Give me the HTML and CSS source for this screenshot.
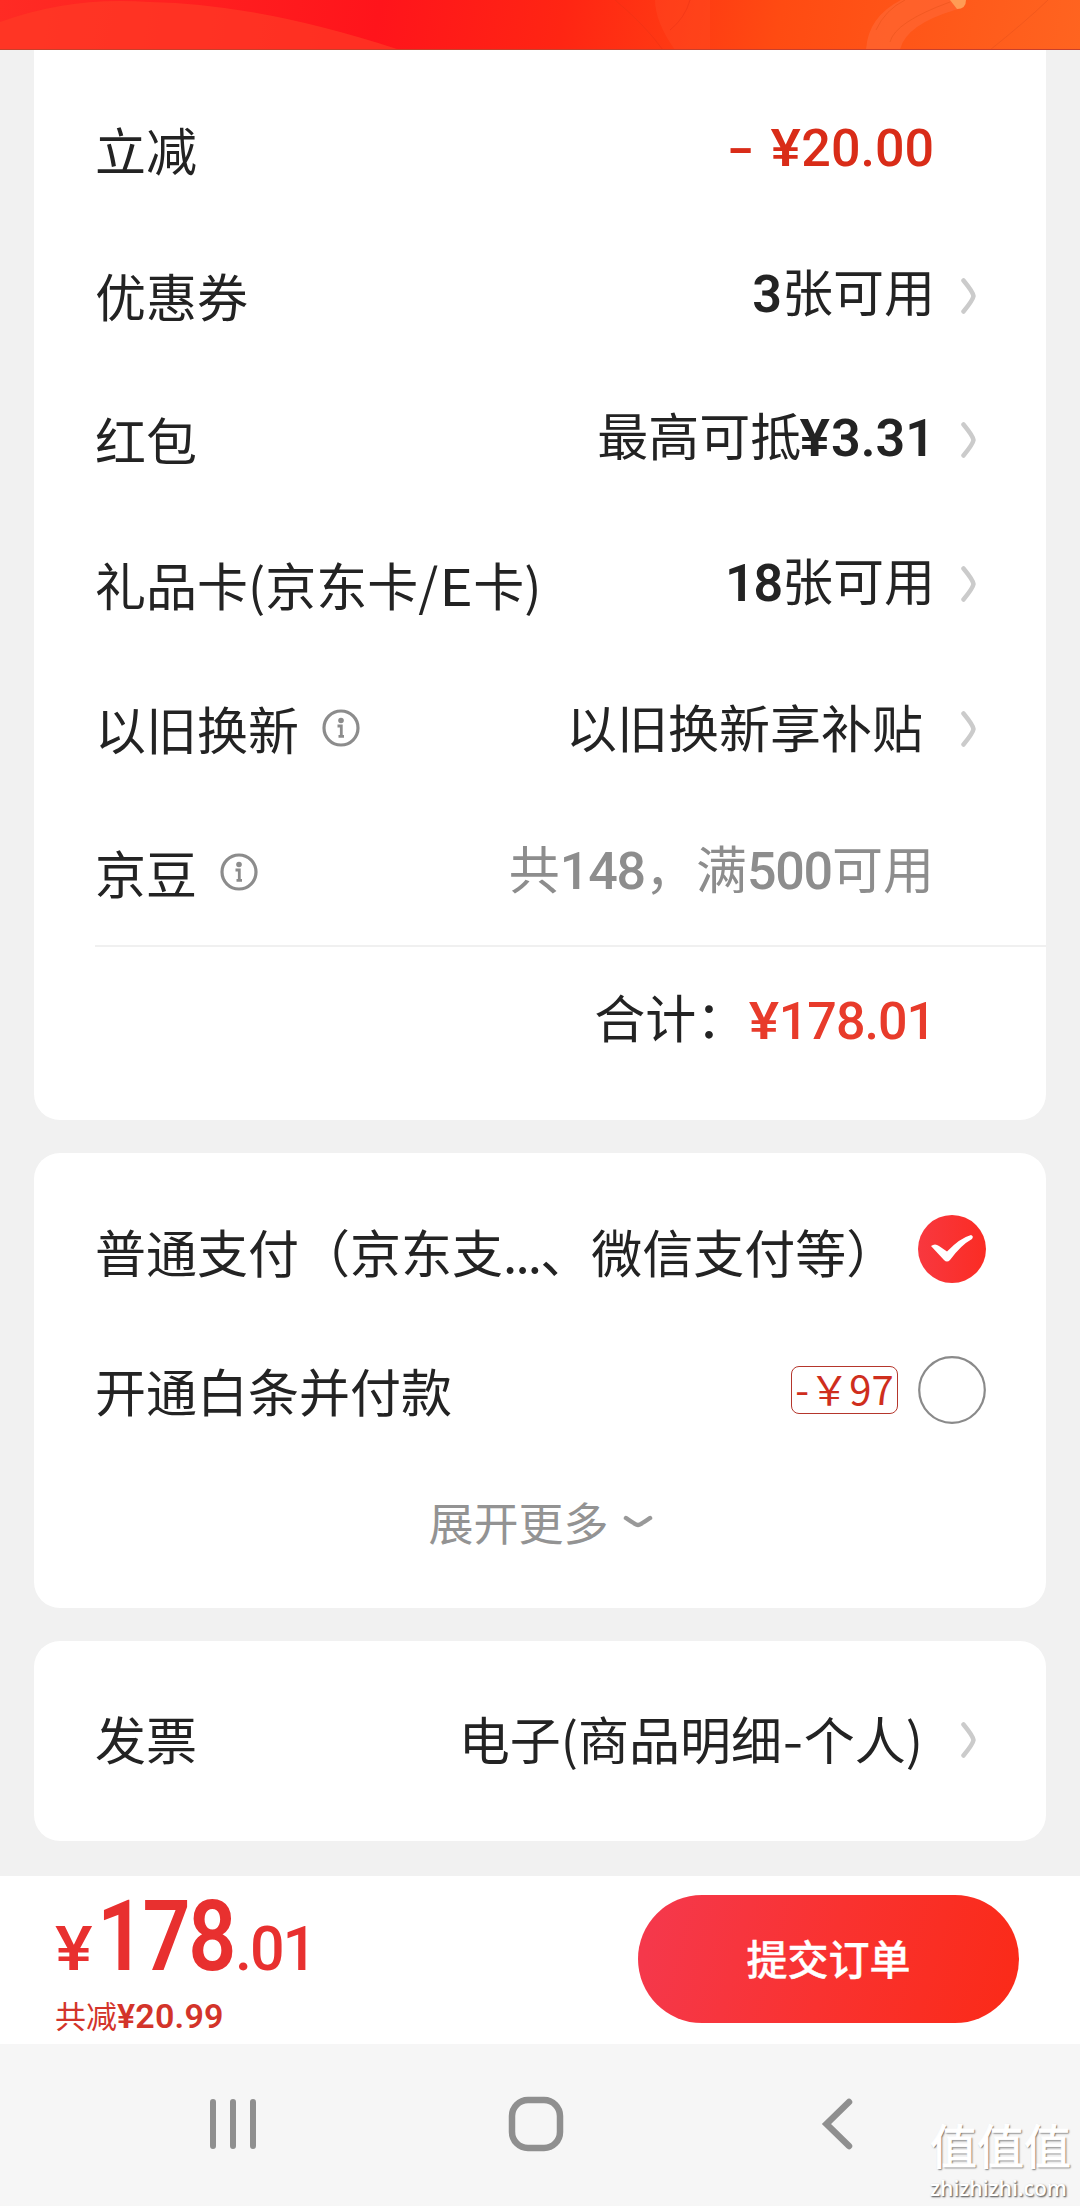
FILE: index.html
```html
<!DOCTYPE html>
<html lang="zh-CN">
<head>
<meta charset="utf-8">
<title>填写订单</title>
<link rel="stylesheet" href="styles.css">
</head>
<body>
<svg class="icon-defs" aria-hidden="true">
  <symbol id="chevron" viewBox="0 0 16 36"><path d="M2.500 2.500 Q12 14 12.500 18 Q12 22 2.500 33.500" fill="none" stroke="#cbcbcb" stroke-width="4.500" stroke-linecap="round"/></symbol>
  <symbol id="info" viewBox="0 0 40 40"><circle cx="20" cy="20" r="17" fill="none" stroke="#8c8c8c" stroke-width="3.200"/><circle cx="20" cy="12.500" r="2.800" fill="#8c8c8c"/><path d="M16.500 18H20.300V28.500M17.500 28.300H23" fill="none" stroke="#8c8c8c" stroke-width="2.800"/></symbol>
</svg>
<header class="banner">
  <svg width="1080" height="49" viewBox="0 0 1080 49">
    <path d="M0 22 Q70 -4 150 2 Q260 4 400 50 H0Z" fill="#ff3a25" opacity=".7"/>
    <path d="M655 0 Q655 22 675 50 H710 V0Z" fill="#ff4a26" opacity=".4"/>
    <path d="M615 0 Q645 25 663 50 M690 0 Q685 18 670 30" fill="none" stroke="#e93216" opacity=".5"/>
    <path d="M866 50 Q868 15 905 -2 H965 Q966 8 955 10 Q905 25 900 50Z" fill="#ff6430" opacity=".8"/>
    <path d="M950 0 H966 Q966 9 957 9Z" fill="#ff9c55"/>
    <path d="M890 42 Q895 22 950 2 M876 30 Q885 10 905 0 M990 50 Q1025 22 1048 0" fill="none" stroke="#e9531c" opacity=".6"/>
  </svg>
</header>
<main class="page">
  <section class="card card-summary">
    <div class="row first"><span class="label">立减</span><span class="value red"><span class="num"><span class="minus">-</span><span class="cny">¥</span>20.00</span></span></div>
    <div class="row"><span class="label">优惠券</span><span class="value"><span class="num bold">3</span>张可用</span><svg class="chev"><use href="#chevron"/></svg></div>
    <div class="row"><span class="label">红包</span><span class="value">最高可抵<span class="num bold"><span class="cny">¥</span>3.31</span></span><svg class="chev"><use href="#chevron"/></svg></div>
    <div class="row"><span class="label">礼品卡(京东卡/<span class="latin">E</span>卡)</span><span class="value"><span class="num bold tight">18</span>张可用</span><svg class="chev"><use href="#chevron"/></svg></div>
    <div class="row"><span class="label">以旧换新</span><svg class="info"><use href="#info"/></svg><span class="value wide low">以旧换新享补贴</span><svg class="chev"><use href="#chevron"/></svg></div>
    <div class="row"><span class="label">京豆</span><svg class="info"><use href="#info"/></svg><span class="value muted">共<span class="num tight">148</span>，满<span class="num tight">500</span>可用</span></div>
    <div class="total"><span>合计：</span><span class="num total-price"><span class="cny">¥</span>178.01</span></div>
  </section>
  <section class="card card-pay">
    <div class="pay-row"><span>普通支付（京东支<span class="dots">...</span>、微信支付等）</span>
      <svg class="radio" viewBox="0 0 68 68"><defs><linearGradient id="rg"><stop stop-color="#f8383f"/><stop offset="1" stop-color="#fb2c24"/></linearGradient></defs><circle cx="34" cy="34" r="34" fill="url(#rg)"/><path d="M13 31 Q17 28 21 31 L29 36.500 Q42 23 53 20 Q56 21 54 24 Q43 30 32 45 Q29 48 26 45Z" fill="#fff"/></svg>
    </div>
    <div class="pay-row second"><span>开通白条并付款</span><span class="tag">-￥97</span>
      <svg class="radio" viewBox="0 0 68 68"><circle cx="34" cy="34" r="32.800" fill="#fff" stroke="#8a8a8a" stroke-width="2.200"/></svg>
    </div>
    <div class="more"><span>展开更多</span><svg width="30" height="16" viewBox="0 0 30 16"><path d="M3 4 Q13 11 15 11 Q17 11 27 4" fill="none" stroke="#999" stroke-width="4.500" stroke-linecap="round"/></svg></div>
  </section>
  <section class="card card-invoice">
    <div class="row"><span class="label">发票</span><span class="value wide flat">电子(商品明细<span class="dash">-</span>个人)</span><svg class="chev"><use href="#chevron"/></svg></div>
  </section>
</main>
<footer class="checkout">
  <div class="sum">
    <div class="price"><span class="yen">¥</span><span class="int">178</span><span class="dec">.01</span></div>
    <div class="saved">共减<span class="saved-num">¥20.99</span></div>
  </div>
  <button class="submit">提交订单</button>
</footer>
<nav class="sysnav">
  <svg width="46" height="54" viewBox="0 0 46 54"><path d="M3 5V49M23 5V49M43 5V49" stroke="#8f8f8f" stroke-width="6" stroke-linecap="round"/></svg>
  <svg class="home" width="56" height="56" viewBox="0 0 56 56"><rect x="4" y="4" width="48" height="48" rx="16" fill="none" stroke="#8f8f8f" stroke-width="6.500"/></svg>
  <svg width="32" height="54" viewBox="0 0 32 54"><path d="M28 5L5.500 27L28 49" fill="none" stroke="#8f8f8f" stroke-width="6.500" stroke-linecap="round"/></svg>
  <div class="watermark"><div class="wm-name">值值值</div><div class="wm-url">zhizhizhi.com</div></div>
</nav>
</body>
</html>
```
FILE: styles.css
```css
* { box-sizing: border-box; }
body {
  margin: 0;
  width: 1080px;
  height: 2206px;
  overflow: hidden;
  display: flex;
  flex-direction: column;
  background: #f1f1f1;
  color: #232323;
  font-family: "Noto Sans CJK SC", sans-serif;
  font-size: 51px;
  line-height: 60px;
  white-space: nowrap;
}
svg { display: block; flex: none; }
.icon-defs { position: absolute; width: 0; height: 0; }
.banner {
  height: 50px;
  flex: none;
  background: linear-gradient(100deg, #ff2b24 0%, #ff141b 35%, #ff2513 52%, #ff4b12 72%, #ff6420 100%);
  border-bottom: 1px solid #c8402c;
}
.page {
  height: 1826px;
  flex: none;
  padding: 0 34px;
  display: flex;
  flex-direction: column;
  gap: 33px;
}
.card { background: #fff; border-radius: 26px; flex: none; }
.card-summary { height: 1070px; padding: 25px 0 0 61px; border-radius: 0 0 26px 26px; }
.row { height: 144.3px; display: flex; align-items: center; padding-right: 69px; }
.row.first { height: 148px; }
.value { margin: -9px 43px 0 auto; }
.value:has(+ .chev) { margin-right: 26px; }
.value.wide:has(+ .chev) { margin-right: 38px; }
.value.low { margin-top: -5px; }
.value.flat { margin-top: -1px; }
.row .chev { width: 16px; height: 36px; margin-top: 1px; }
.card-invoice .chev { margin-top: 4px; }
.info { width: 40px; height: 40px; margin: -1px 0 0 22px; }
.num { font-family: Roboto, sans-serif; font-weight: 500; font-size: 52px; line-height: 1; }
.tight { letter-spacing: -1.200px; }
.cny { display: inline-block; transform: scaleX(1.1); margin-right: 2px; }
.minus { display: inline-block; transform: scaleX(1.5); margin-right: 22px; }
.bold { font-weight: 600; }
.latin { display: inline-block; transform: scaleX(1.12); margin: 0 2px 0 3px; }
.dots { letter-spacing: -1.800px; }
.dash { display: inline-block; transform: scaleX(1.15); margin: 0 2px; }
.red { color: #d92c18; }
.muted { color: #8d8d8d; }
.total { border-top: 2px solid #f0f0f0; height: 144px; display: flex; justify-content: flex-end; align-items: center; padding-right: 111px; margin-top: 1px; }
.total > span:first-child { margin: -4px 3px 0 0; }
.total-price { color: #e83b2b; margin-top: 7px; letter-spacing: -1px; }
.card-pay { height: 455px; padding: 28px 60px 0 61px; }
.pay-row { height: 139.5px; display: flex; align-items: center; justify-content: space-between; }
.radio { width: 68px; height: 68px; margin-top: -4px; }
.second .radio { margin-top: -1px; }
.tag { margin: -1px 20px 0 auto; height: 48px; width: 107px; border: 1.500px solid #b5362c; border-radius: 8px; color: #cf2e1d; font-size: 40px; line-height: 42px; text-align: center; }
.more { height: 124px; display: flex; align-items: center; justify-content: center; gap: 14px; color: #939393; font-size: 45px; }
.card-invoice { height: 200px; padding: 25px 0 0 61px; }
.checkout { height: 168px; flex: none; background: #fff; display: flex; justify-content: space-between; padding: 19px 61px 0 55px; color: #e8302f; }
.price { font-family: Roboto, sans-serif; font-weight: 500; line-height: 84px; height: 98px; }
.yen, .dec { font-size: 61px; }
.yen { display: inline-block; width: 42px; transform: scaleX(1.16); transform-origin: left; }
.int { display: inline-block; width: 141px; font-size: 98px; font-weight: 600; letter-spacing: -3px; transform: scaleX(.86); transform-origin: left; margin: 0 2px 0 0; }
.dec { margin-left: -5px; letter-spacing: -2px; }
.saved { font-size: 31px; line-height: 44px; color: #d3342a; }
.saved-num { font-family: Roboto, sans-serif; font-weight: 600; font-size: 34px; line-height: 1; letter-spacing: .200px; }
.submit { width: 381px; height: 128px; border: 0; padding: 0 0 4px; border-radius: 64px; color: #fff; font: 500 41px/60px "Noto Sans CJK SC", sans-serif; -webkit-text-stroke: .4px #fff; background: linear-gradient(105deg, #f5384b 5%, #f93230 50%, #fb2a17 100%); }
.sysnav { height: 162px; flex: none; background: #f6f6f6; position: relative; display: flex; align-items: center; padding: 0 227px 2px 210px; justify-content: space-between; }
.home { margin-right: 5px; }
.watermark { position: absolute; left: 930px; top: 72px; color: #fff; text-shadow: 1px 1px 2px #666, 1px 1px 1px #999; }
.wm-name { font-size: 47px; line-height: 56px; -webkit-text-stroke: 1px #fff; }
.wm-url { font: 600 21px/28px "Open Sans", sans-serif; margin-top: 2px; }
```
